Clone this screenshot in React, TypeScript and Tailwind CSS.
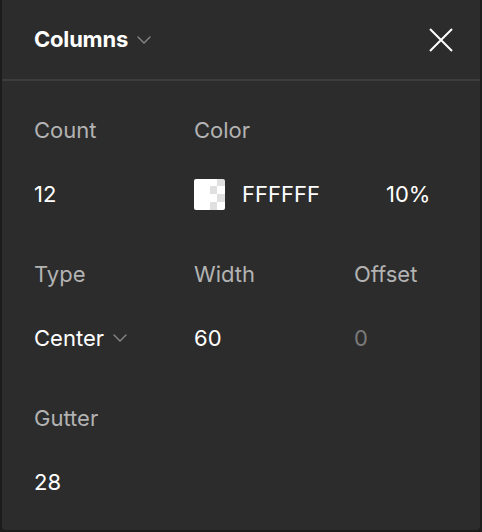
import { ChevronDown } from "lucide-react";

function Label({ children }: { children: React.ReactNode }) {
  return <div className="h-[26px] leading-[26px] text-[22px] text-[#b3b3b3]">{children}</div>;
}

function Swatch() {
  return (
    <div className="w-[31px] h-[31px] rounded-[2px] overflow-hidden flex shrink-0">
      <div className="w-1/2 h-full bg-white" />
      <div className="w-1/2 h-full grid grid-cols-2 grid-rows-4">
        {Array.from({ length: 8 }).map((_, i) => {
          const row = Math.floor(i / 2);
          const col = i % 2;
          const light = (row + col) % 2 === 0;
          return <div key={i} className={light ? "bg-white" : "bg-[#e0e0e0]"} />;
        })}
      </div>
    </div>
  );
}

export default function App() {
  return (
    <div className="w-[482px] h-[532px] bg-[#1c1c1c] pl-[2px] pr-[2px] pb-[2px]" style={{ fontFamily: "Inter, 'Noto Sans', sans-serif" }}>
      <div className="h-full bg-[#2c2c2c] rounded-b-[4px] flex flex-col">
        <div className="h-[79px] flex items-center justify-between pl-[32px] pr-[27px]">
          <div className="flex items-center gap-[4px]">
            <span className="text-[22px] font-bold text-white tracking-[-0.2px]">Columns</span>
            <ChevronDown className="w-[24px] h-[24px] text-[#8a8a8a] mt-[1px]" strokeWidth={1.3} />
          </div>
          <svg width="24" height="24" viewBox="0 0 24 24" className="text-white">
            <path d="M1 1L23 23M23 1L1 23" stroke="currentColor" strokeWidth="2" fill="none" />
          </svg>
        </div>
        <div className="h-[2px] bg-[#3d3d3d]" />
        <div className="pl-[32px] pt-[36px] grid grid-cols-[160px_160px_1fr] text-[22px] text-white">
          <Label>Count</Label>
          <Label>Color</Label>
          <div />
          <div className="mt-[38px] h-[26px] leading-[26px]">12</div>
          <div className="mt-[38px] col-span-2 flex items-center h-[26px]">
            <Swatch />
            <span className="ml-[17px] w-[144px]">FFFFFF</span>
            <span>10%</span>
          </div>

          <div className="mt-[54px]"><Label>Type</Label></div>
          <div className="mt-[54px]"><Label>Width</Label></div>
          <div className="mt-[54px]"><Label>Offset</Label></div>
          <div className="mt-[38px] h-[26px] leading-[26px] flex items-center gap-[4px]">
            <span>Center</span>
            <ChevronDown className="w-[24px] h-[24px] text-[#8a8a8a]" strokeWidth={1.3} />
          </div>
          <div className="mt-[38px] h-[26px] leading-[26px]">60</div>
          <div className="mt-[38px] h-[26px] leading-[26px] text-[#7a7a7a]">0</div>

          <div className="mt-[54px]"><Label>Gutter</Label></div>
          <div />
          <div />
          <div className="mt-[38px] h-[26px] leading-[26px]">28</div>
        </div>
      </div>
    </div>
  );
}
